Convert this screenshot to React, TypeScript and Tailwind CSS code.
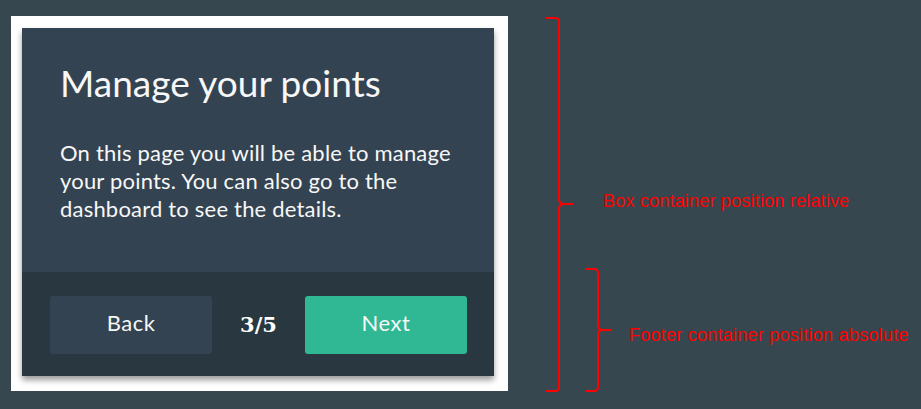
import React from "react";

const Annotations = () => {
  return (
    <div className="relative h-[409px] flex-1">
      <svg
        className="absolute inset-0"
        width="413"
        height="409"
        viewBox="508 0 413 409"
        fill="none"
        stroke="#ff0000"
        strokeWidth="2"
      >
        <path d="M546 18 H555 Q559 18 559 22 V199 Q559 204 564 204 H573 M564 204 Q559 204 559 209 V387 Q559 391 555 391 H546" />
        <path d="M585 269 H594 Q598 269 598 273 V325 Q598 330 603 330 H612 M603 330 Q598 330 598 335 V387 Q598 391 594 391 H585" />
      </svg>
      <span className="absolute left-[95px] top-[191px] text-[18px] leading-[20px] tracking-[0.2px] text-[#ff0000] font-['Liberation_Sans',Arial,sans-serif] whitespace-nowrap">
        Box container position relative
      </span>
      <span className="absolute left-[121px] top-[325px] text-[18px] leading-[20px] tracking-[0.25px] text-[#ff0000] font-['Liberation_Sans',Arial,sans-serif] whitespace-nowrap">
        Footer container position absolute
      </span>
    </div>
  );
};

const App = () => {
  return (
    <div className="w-[921px] h-[409px] bg-[#37474f] flex overflow-hidden">
      <div className="pl-[11px] pt-[16px]">
        <div className="bg-white pl-[11px] pr-[14px] pt-[12px] pb-[15px]">
          {/* Box */}
          <div className="w-[472px] h-[348px] bg-[#344351] flex flex-col shadow-[0_4px_6px_rgba(0,0,0,0.4)] font-['Lato',sans-serif] text-[#f7f7f7]">
            <div className="pl-[38px] pr-[20px] pt-[33px]">
              <h1 className="text-[37px] leading-[44px] font-normal">
                Manage your points
              </h1>
              <p className="mt-[34px] text-[22px] leading-[28px] tracking-[0.2px]">
                On this page you will be able to manage
                <br />
                your points. You can also go to the
                <br />
                dashboard to see the details.
              </p>
            </div>

            {/* Footer */}
            <div className="mt-auto h-[104px] bg-[#283740] flex items-center justify-between pl-[28px] pr-[27px] pt-[2px]">
              <button className="w-[162px] h-[58px] pb-[5px] rounded-[3px] bg-[#344351] text-[22px] tracking-[0.5px] text-[#f7f7f7]">
                Back
              </button>
              <span className="text-[21px] font-bold text-white font-['DejaVu_Serif',serif]">
                3/5
              </span>
              <button className="w-[162px] h-[58px] pb-[5px] rounded-[3px] bg-[#2fb893] text-[22px] tracking-[0.5px] text-[#f7f7f7]">
                Next
              </button>
            </div>
          </div>
        </div>
      </div>
      <Annotations />
    </div>
  );
};

export default App;
